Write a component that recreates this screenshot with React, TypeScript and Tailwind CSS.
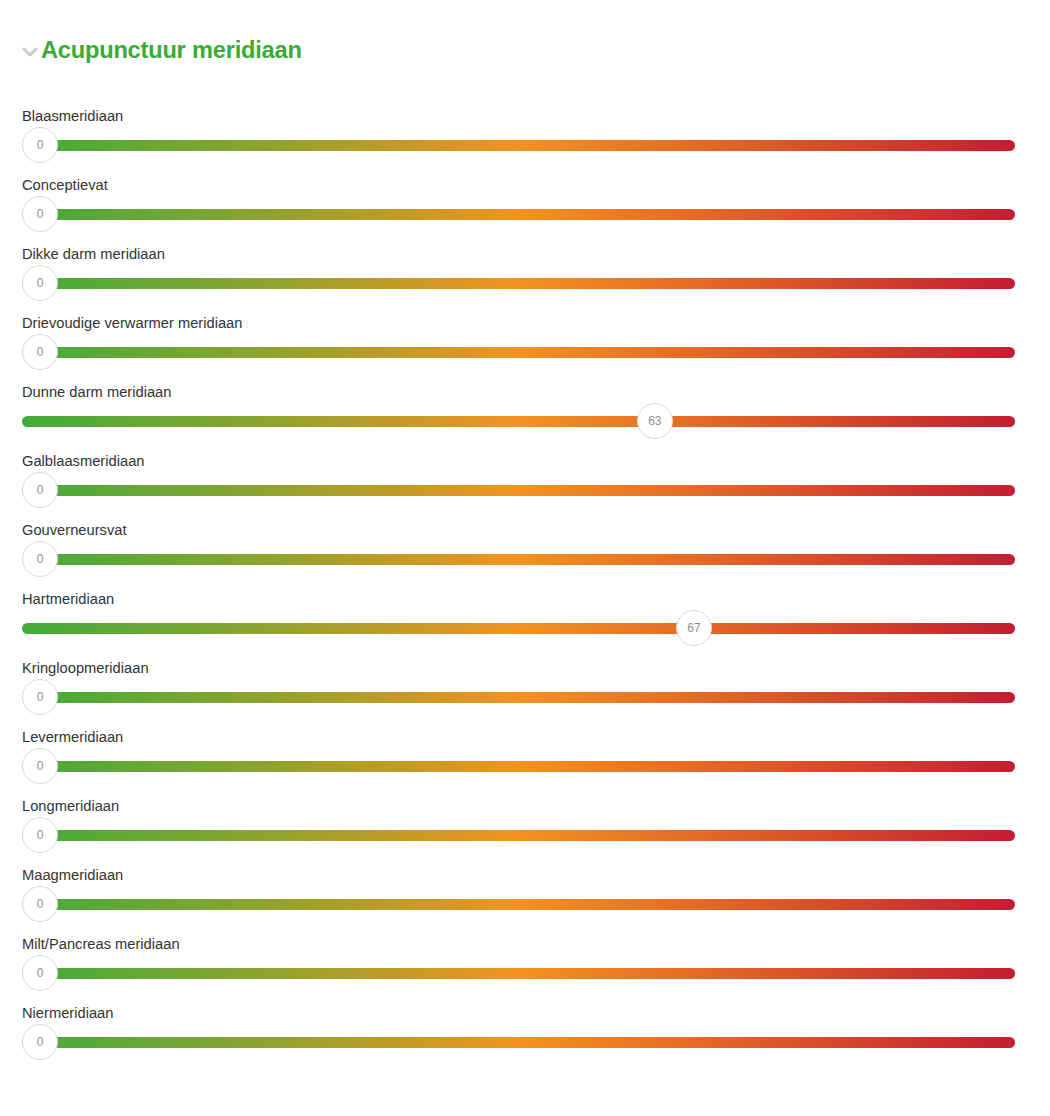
const meridians: { name: string; value: number }[] = [
  { name: "Blaasmeridiaan", value: 0 },
  { name: "Conceptievat", value: 0 },
  { name: "Dikke darm meridiaan", value: 0 },
  { name: "Drievoudige verwarmer meridiaan", value: 0 },
  { name: "Dunne darm meridiaan", value: 63 },
  { name: "Galblaasmeridiaan", value: 0 },
  { name: "Gouverneursvat", value: 0 },
  { name: "Hartmeridiaan", value: 67 },
  { name: "Kringloopmeridiaan", value: 0 },
  { name: "Levermeridiaan", value: 0 },
  { name: "Longmeridiaan", value: 0 },
  { name: "Maagmeridiaan", value: 0 },
  { name: "Milt/Pancreas meridiaan", value: 0 },
  { name: "Niermeridiaan", value: 0 },
];

function Slider({ value }: { value: number }) {
  return (
    <div className="relative h-9">
      <div className="absolute left-0 right-0 top-[13px] h-[11px] rounded-full bg-[linear-gradient(to_right,#41ab3b_0%,#8fa32e_25%,#f3921f_50%,#de5a27_75%,#c31d32_100%)]" />
      <div
        className="absolute top-0 flex h-9 w-9 items-center justify-center rounded-full border border-[#d9d9d9] bg-white text-[12px] text-[#8f8f8f]"
        style={{ left: `calc((100% - 17px) * ${value / 100})` }}
      >
        {value}
      </div>
    </div>
  );
}

export default function App() {
  return (
    <div className="min-h-[1116px] bg-white pl-[22px] pr-[35px] pt-[37px] font-['Liberation_Sans',Arial,sans-serif]">
      <div className="flex h-7 items-center gap-[3px]">
        <svg width="16" height="12" viewBox="0 0 16 12" className="mt-[1px]">
          <path d="M2 3 L8 9 L14 3" fill="none" stroke="#cccccc" strokeWidth="3" strokeLinecap="round" strokeLinejoin="round" />
        </svg>
        <h2 className="text-[23.6px] font-bold tracking-[-0.2px] text-[#3aab35]">Acupunctuur meridiaan</h2>
      </div>

      <div className="mt-[40px] flex flex-col">
        {meridians.map((m) => (
          <div key={m.name} className="pb-[11px]">
            <div className="mb-[1px] pt-[1px] text-[14.7px] leading-5 text-[#333333]">{m.name}</div>
            <Slider value={m.value} />
          </div>
        ))}
      </div>
    </div>
  );
}
